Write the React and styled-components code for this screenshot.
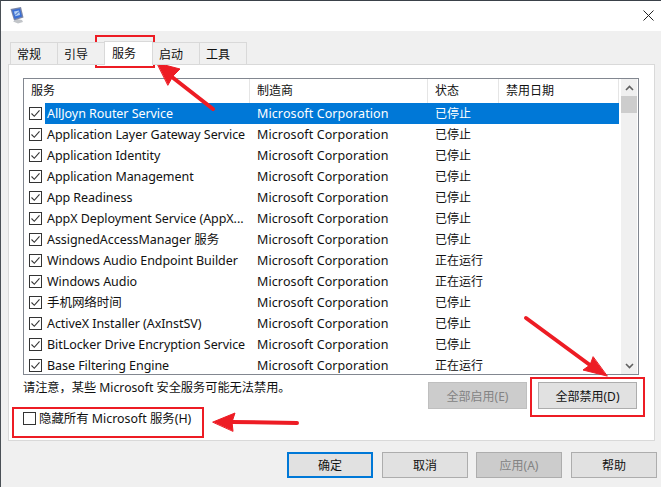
import React from 'react';
import styled, { createGlobalStyle } from 'styled-components';

const SERVICES = [
  ['AllJoyn Router Service', '已停止'],
  ['Application Layer Gateway Service', '已停止'],
  ['Application Identity', '已停止'],
  ['Application Management', '已停止'],
  ['App Readiness', '已停止'],
  ['AppX Deployment Service (AppX...', '已停止'],
  ['AssignedAccessManager 服务', '已停止'],
  ['Windows Audio Endpoint Builder', '正在运行'],
  ['Windows Audio', '正在运行'],
  ['手机网络时间', '已停止'],
  ['ActiveX Installer (AxInstSV)', '已停止'],
  ['BitLocker Drive Encryption Service', '已停止'],
  ['Base Filtering Engine', '正在运行'],
];

const TABS = ['常规', '引导', '服务', '启动', '工具'];

export default function App() {
  return (
    <Page>
      <GlobalStyle />
      <TitleBar>
        <WindowIcon />
        <CloseIcon />
      </TitleBar>
      <Body>
        <Tabs>
          {TABS.map((tab) => (
            <Tab key={tab} active={tab === '服务'}>{tab}</Tab>
          ))}
        </Tabs>
        <Panel>
          <List>
            <Table>
              <Header>
                <HeaderCell column="name">服务</HeaderCell>
                <HeaderCell column="maker">制造商</HeaderCell>
                <HeaderCell column="state">状态</HeaderCell>
                <HeaderCell column="date">禁用日期</HeaderCell>
              </Header>
              {SERVICES.map(([name, state], index) => (
                <Row key={name}>
                  <CheckCell>
                    <CheckBox><CheckMark /></CheckBox>
                  </CheckCell>
                  <Selectable selected={index === 0}>
                    <NameCell>{name}</NameCell>
                    <MakerCell>Microsoft Corporation</MakerCell>
                    <StateCell>{state}</StateCell>
                  </Selectable>
                </Row>
              ))}
            </Table>
            <ScrollBar>
              <ScrollButton><Chevron up /></ScrollButton>
              <ScrollTrack><ScrollThumb /></ScrollTrack>
              <ScrollButton><Chevron /></ScrollButton>
            </ScrollBar>
          </List>
          <ActionRow>
            <Note>请注意，某些 Microsoft 安全服务可能无法禁用。</Note>
            <ActionButton disabled>全部启用(E)</ActionButton>
            <ActionButton>全部禁用(D)</ActionButton>
          </ActionRow>
          <HideRow>
            <CheckBox />
            <HideLabel>隐藏所有 Microsoft 服务(H)</HideLabel>
          </HideRow>
        </Panel>
        <Footer>
          <FooterButton primary>确定</FooterButton>
          <FooterButton>取消</FooterButton>
          <FooterButton disabled>应用(A)</FooterButton>
          <FooterButton>帮助</FooterButton>
        </Footer>
      </Body>
      <TabHighlight />
      <DisableHighlight />
      <HideHighlight />
      <Arrows />
    </Page>
  );
}

function WindowIcon() {
  return (
    <IconSvg width="15" height="17" viewBox="0 0 15 17">
      <path d="M3 14.500l5 2 5-1.500-1-2-5-1z" fill="#c2c5c9" />
      <path d="M0.500 2l10.500-2 2.500 10.500-9.500 3z" fill="#7b86a6" />
      <path d="M2 3l8-1.500 2 8-7.500 2.500z" fill="#3a6fd6" />
      <path d="M4 4.500l5-1 1 4.500-4.800 1.300z" fill="#b4d0f4" />
      <path d="M5 8.500l4-4" stroke="#2d5fc0" strokeWidth="1" fill="none" />
    </IconSvg>
  );
}

function CloseIcon() {
  return (
    <CloseSvg width="11" height="11" viewBox="0 0 11 11">
      <path d="M.5.5l10 10M10.500.5l-10 10" stroke="#222" strokeWidth="1" fill="none" />
    </CloseSvg>
  );
}

function CheckMark() {
  return (
    <svg width="11" height="11" viewBox="0 0 11 11">
      <path d="M1.500 5.500l2.800 2.800 5.200-6" stroke="#333" strokeWidth="1.100" fill="none" />
    </svg>
  );
}

function Chevron({ up }) {
  return (
    <svg width="9" height="6" viewBox="0 0 9 6">
      <path d={up ? 'M1 5l3.500-3.500L8 5' : 'M1 1l3.500 3.500L8 1'} stroke="#606060" strokeWidth="1.600" fill="none" />
    </svg>
  );
}

// the red tutorial arrows painted over the dialog
function Arrows() {
  return (
    <ArrowLayer width="661" height="487" viewBox="0 0 661 487">
      <g fill="#ed1c24" stroke="#ed1c24" strokeLinecap="round">
        <path d="M213 109L172 77" strokeWidth="4" fill="none" />
        <path d="M157 63L180 69L173 76L168 85z" strokeWidth="1" />
        <path d="M526 318L594 368" strokeWidth="4" fill="none" />
        <path d="M607 376L583 370L590 365L593 357z" strokeWidth="1" />
        <path d="M297 423L232 422" strokeWidth="4" fill="none" />
        <path d="M213 422L235 413L232 422L233 431z" strokeWidth="1" />
      </g>
    </ArrowLayer>
  );
}

const GlobalStyle = createGlobalStyle`
  html, body {
    margin: 0;
    padding: 0;
    background: #f0f0f0;
  }
  * {
    box-sizing: border-box;
  }
`;

const FONT = `"Noto Sans", "Noto Sans CJK SC", sans-serif`;

const Page = styled.div`
  position: relative;
  display: flex;
  flex-direction: column;
  width: 661px;
  height: 487px;
  overflow: hidden;
  border-top: 1px solid #3a4149;
  border-left: 1px solid #4a5056;
  font-family: ${FONT};
  font-size: 12px;
  color: #111;
`;

const TitleBar = styled.div`
  display: flex;
  align-items: center;
  justify-content: space-between;
  height: 30px;
  padding: 0 7px 2px 9px;
  background: #fff;
`;

const IconSvg = styled.svg`
  display: block;
`;

const CloseSvg = styled.svg`
  display: block;
`;

const Body = styled.div`
  display: flex;
  flex: 1;
  flex-direction: column;
  padding: 11px 6px 0 7px;
  background: #f0f0f0;
`;

const Tabs = styled.div`
  display: flex;
  align-items: flex-end;
  height: 23px;
  padding-left: 3px;
  margin-bottom: -1px;
  position: relative;
  z-index: 1;
`;

const Tab = styled.div`
  display: flex;
  align-items: center;
  flex: none;
  width: ${({ active }) => (active ? '49px' : '48px')};
  height: ${({ active }) => (active ? '24px' : '23px')};
  margin-left: -1px;
  padding: 0 0 ${({ active }) => (active ? '2px' : '0')} ${({ active }) => (active ? '7px' : '6px')};
  border: 1px solid #d9d9d9;
  border-bottom: ${({ active }) => (active ? 'none' : '1px solid #d9d9d9')};
  background: ${({ active }) => (active ? '#fff' : '#f0f0f0')};
  position: relative;
  z-index: ${({ active }) => (active ? 2 : 0)};
`;

const Panel = styled.div`
  display: flex;
  flex-direction: column;
  height: 377px;
  padding: 13px 15px 0 14px;
  background: #fff;
  border: 1px solid #d9d9d9;
`;

const List = styled.div`
  display: flex;
  flex: none;
  height: 297px;
  border: 1px solid #828790;
  background: #fff;
`;

const Table = styled.div`
  flex: none;
  width: 595px;
  overflow: hidden;
`;

const COLUMN_WIDTH = { name: 226, maker: 178, state: 71, date: 120 };

const Header = styled.div`
  display: flex;
  height: 24px;
`;

const HeaderCell = styled.div`
  display: flex;
  align-items: center;
  flex: none;
  width: ${({ column }) => COLUMN_WIDTH[column]}px;
  padding: 0 0 2px 7px;
  border-right: 1px solid #e5e5e5;
`;

const Row = styled.div`
  display: flex;
  height: 21px;
`;

const CheckCell = styled.div`
  display: flex;
  align-items: center;
  flex: none;
  width: 21px;
  padding-left: 5px;
`;

const CheckBox = styled.div`
  display: flex;
  align-items: center;
  justify-content: center;
  flex: none;
  width: 13px;
  height: 13px;
  border: 1px solid #333;
  background: #fff;
`;

const Selectable = styled.div`
  display: flex;
  align-items: flex-start;
  flex: none;
  width: 574px;
  padding-top: 2px;
  line-height: 17px;
  background: ${({ selected }) => (selected ? '#0078d7' : 'transparent')};
  color: ${({ selected }) => (selected ? '#fff' : 'inherit')};
`;

const NameCell = styled.div`
  flex: none;
  width: 205px;
  padding-left: 2px;
  font-size: 12.5px;
  letter-spacing: -0.06px;
  white-space: nowrap;
  overflow: hidden;
`;

const MakerCell = styled.div`
  flex: none;
  width: ${COLUMN_WIDTH.maker}px;
  padding-left: 7px;
  font-size: 12.5px;
  letter-spacing: 0.1px;
  white-space: nowrap;
`;

const StateCell = styled.div`
  flex: none;
  width: ${COLUMN_WIDTH.state}px;
  padding-left: 7px;
  white-space: nowrap;
`;

const ScrollBar = styled.div`
  display: flex;
  flex-direction: column;
  flex: none;
  width: 16px;
  margin: 0 1px 0 2px;
  background: #f0f0f0;
`;

const ScrollButton = styled.div`
  display: flex;
  align-items: center;
  justify-content: center;
  height: 17px;
`;

const ScrollTrack = styled.div`
  flex: 1;
`;

const ScrollThumb = styled.div`
  height: 17px;
  background: #cdcdcd;
`;

const ActionRow = styled.div`
  display: flex;
  flex: none;
  align-items: flex-start;
  height: 34px;
  padding: 7px 2px 0 0;
  gap: 11px;
`;

const Note = styled.div`
  flex: 1;
  font-size: 12.2px;
  line-height: 12px;
`;

const ActionButton = styled.button`
  width: 99px;
  height: 27px;
  padding: 0;
  font: inherit;
  border: 1px solid ${({ disabled }) => (disabled ? '#bfbfbf' : '#adadad')};
  background: ${({ disabled }) => (disabled ? '#cccccc' : '#e1e1e1')};
  color: ${({ disabled }) => (disabled ? '#838383' : '#111')};
`;

const HideRow = styled.div`
  display: flex;
  flex: none;
  align-items: center;
  gap: 3px;
  height: 13px;
  margin-top: 3px;
`;

const HideLabel = styled.span`
  padding-bottom: 1px;
  font-size: 12.4px;
  white-space: nowrap;
`;

const Footer = styled.div`
  display: flex;
  justify-content: flex-end;
  gap: 9px;
  margin-right: -2px;
  padding-top: 11px;
`;

const FooterButton = styled.button`
  width: 86px;
  height: 26px;
  margin-left: ${({ disabled }) => (disabled ? '-1px' : '0')};
  padding: 0;
  font: inherit;
  border: ${({ primary }) => (primary ? '2px solid #0078d7' : '1px solid #adadad')};
  background: ${({ disabled }) => (disabled ? '#cccccc' : '#e1e1e1')};
  color: ${({ disabled }) => (disabled ? '#838383' : '#111')};
`;

const Highlight = styled.div`
  position: absolute;
  border: 2px solid #ed1c24;
  pointer-events: none;
`;

const TabHighlight = styled(Highlight)`
  left: 94px;
  top: 34px;
  width: 60px;
  height: 33px;
`;

const DisableHighlight = styled(Highlight)`
  left: 529px;
  top: 376px;
  width: 115px;
  height: 40px;
`;

const HideHighlight = styled(Highlight)`
  left: 11px;
  top: 406px;
  width: 192px;
  height: 31px;
`;

const ArrowLayer = styled.svg`
  position: absolute;
  left: -1px;
  top: -1px;
  pointer-events: none;
`;
